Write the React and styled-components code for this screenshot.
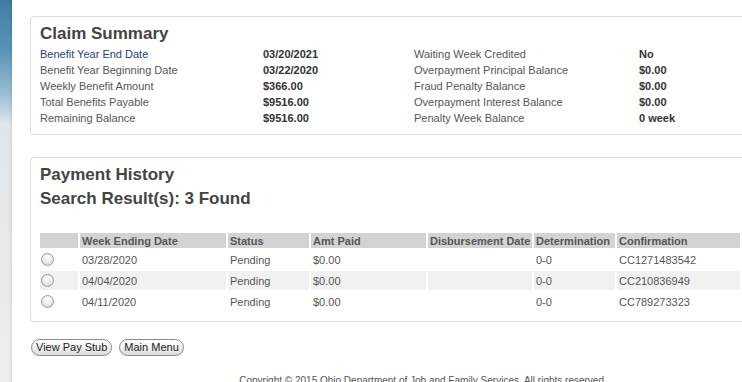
import styled, { createGlobalStyle } from 'styled-components';

const GlobalStyle = createGlobalStyle`
  html, body {
    margin: 0;
    padding: 0;
    background: #ffffff;
    overflow: hidden;
  }
  body {
    font-family: "Liberation Sans", Arial, sans-serif;
    font-size: 11px;
    color: #555;
  }
`;

const summaryLeft = [
  { label: 'Benefit Year End Date', value: '03/20/2021', link: true },
  { label: 'Benefit Year Beginning Date', value: '03/22/2020' },
  { label: 'Weekly Benefit Amount', value: '$366.00' },
  { label: 'Total Benefits Payable', value: '$9516.00' },
  { label: 'Remaining Balance', value: '$9516.00' },
];

const summaryRight = [
  { label: 'Waiting Week Credited', value: 'No' },
  { label: 'Overpayment Principal Balance', value: '$0.00' },
  { label: 'Fraud Penalty Balance', value: '$0.00' },
  { label: 'Overpayment Interest Balance', value: '$0.00' },
  { label: 'Penalty Week Balance', value: '0 week' },
];

const payments = [
  { week: '03/28/2020', status: 'Pending', paid: '$0.00', disb: '', det: '0-0', conf: 'CC1271483542' },
  { week: '04/04/2020', status: 'Pending', paid: '$0.00', disb: '', det: '0-0', conf: 'CC210836949' },
  { week: '04/11/2020', status: 'Pending', paid: '$0.00', disb: '', det: '0-0', conf: 'CC789273323' },
];

const colunas = [38, 146, 81, 115, 104, 81];

export default function App() {
  return (
    <>
      <GlobalStyle />
      <Page>
        <Strip />
        <Main>
          <Panel $top={16}>
            <Titulo>Claim Summary</Titulo>
            <Summary>
              {summaryLeft.map((item, i) => (
                <SummaryRow key={item.label}>
                  <Label $link={item.link}>{item.label}</Label>
                  <Value>{item.value}</Value>
                  <Label>{summaryRight[i].label}</Label>
                  <Value>{summaryRight[i].value}</Value>
                </SummaryRow>
              ))}
            </Summary>
          </Panel>

          <Panel $top={22}>
            <Titulo>Payment History</Titulo>
            <Subtitulo>Search Result(s): 3 Found</Subtitulo>
            <Tabela>
              <colgroup>
                {colunas.map((w, i) => (
                  <col key={i} style={{ width: w }} />
                ))}
                <col />
              </colgroup>
              <thead>
                <tr>
                  <Th></Th>
                  <Th>Week Ending Date</Th>
                  <Th>Status</Th>
                  <Th>Amt Paid</Th>
                  <Th>Disbursement Date</Th>
                  <Th>Determination</Th>
                  <Th>Confirmation</Th>
                </tr>
              </thead>
              <tbody>
                {payments.map((p, i) => (
                  <Linha key={p.conf} $par={i % 2 === 1}>
                    <Td><Radio /></Td>
                    <Td>{p.week}</Td>
                    <Td>{p.status}</Td>
                    <Td>{p.paid}</Td>
                    <Td>{p.disb}</Td>
                    <Td>{p.det}</Td>
                    <Td>{p.conf}</Td>
                  </Linha>
                ))}
              </tbody>
            </Tabela>
          </Panel>

          <Botoes>
            <Botao>View Pay Stub</Botao>
            <Botao>Main Menu</Botao>
          </Botoes>

          <Rodape>Copyright © 2015 Ohio Department of Job and Family Services. All rights reserved.</Rodape>
        </Main>
      </Page>
    </>
  );
}

const Page = styled.div`
  display: flex;
  width: 860px;
  height: 382px;
`;

const Strip = styled.div`
  flex: 0 0 12px;
  background: linear-gradient(
    to bottom,
    #3f7ea6 0px,
    #5a93b8 50px,
    #9dbfd4 95px,
    #dfe7ec 125px,
    #e4e8eb 200px,
    #eceeef 382px
  );
  box-shadow: inset -2px 0 2px rgba(0, 0, 0, 0.06);
`;

const Main = styled.div`
  flex: 0 0 822px;
  display: flex;
  flex-direction: column;
  padding: 0 18px;
  box-sizing: border-box;
`;

const Panel = styled.div`
  margin-top: ${({ $top }) => $top}px;
  border: 1px solid #dcdcdc;
  border-radius: 4px;
  padding: 6px 9px 8px 9px;
  background: #fff;
`;

const Titulo = styled.div`
  font-size: 17px;
  font-weight: bold;
  color: #444;
  line-height: 21px;
`;

const Subtitulo = styled.div`
  font-size: 17px;
  font-weight: bold;
  color: #444;
  line-height: 21px;
  margin-top: 3px;
  margin-bottom: 22px;
`;

const Summary = styled.div`
  display: flex;
  flex-direction: column;
  margin-top: 2px;
`;

const SummaryRow = styled.div`
  display: grid;
  grid-template-columns: 223px 151px 225px 1fr;
  line-height: 16px;
`;

const Label = styled.span`
  color: ${({ $link }) => ($link ? '#26407a' : '#555')};
`;

const Value = styled.span`
  font-weight: bold;
  color: #333;
`;

const Tabela = styled.table`
  width: 704px;
  margin-left: -2px;
  border-collapse: separate;
  border-spacing: 2px;
  table-layout: fixed;
  font-size: 11px;
`;

const Th = styled.th`
  background: #d3d3d3;
  color: #555;
  font-weight: bold;
  text-align: left;
  height: 15px;
  padding: 0 2px;
  white-space: nowrap;
`;

const Linha = styled.tr`
  background: ${({ $par }) => ($par ? '#f1f1f1' : 'transparent')};
`;

const Td = styled.td`
  height: 19px;
  padding: 0 2px;
  color: #555;
  white-space: nowrap;
  vertical-align: middle;
`;

const Radio = styled.span`
  display: block;
  width: 11px;
  height: 11px;
  margin-left: -1px;
  border-radius: 50%;
  border: 1px solid #9a9a9a;
  background: radial-gradient(circle at 50% 30%, #ffffff 0%, #ececec 50%, #cfcfcf 100%);
`;

const Botoes = styled.div`
  display: flex;
  gap: 7px;
  margin-top: 17px;
  margin-left: 1px;
`;

const Botao = styled.button`
  font-family: "Liberation Sans", Arial, sans-serif;
  font-size: 11px;
  color: #222;
  height: 17px;
  padding: 0 4px;
  border: 1px solid #8a8a8a;
  border-radius: 9px;
  background: linear-gradient(to bottom, #ffffff 0%, #f1f1f1 50%, #dadada 100%);
  line-height: 15px;
  cursor: pointer;
`;

const Rodape = styled.div`
  text-align: center;
  margin-top: 19px;
  color: #555;
  font-size: 10px;
`;
